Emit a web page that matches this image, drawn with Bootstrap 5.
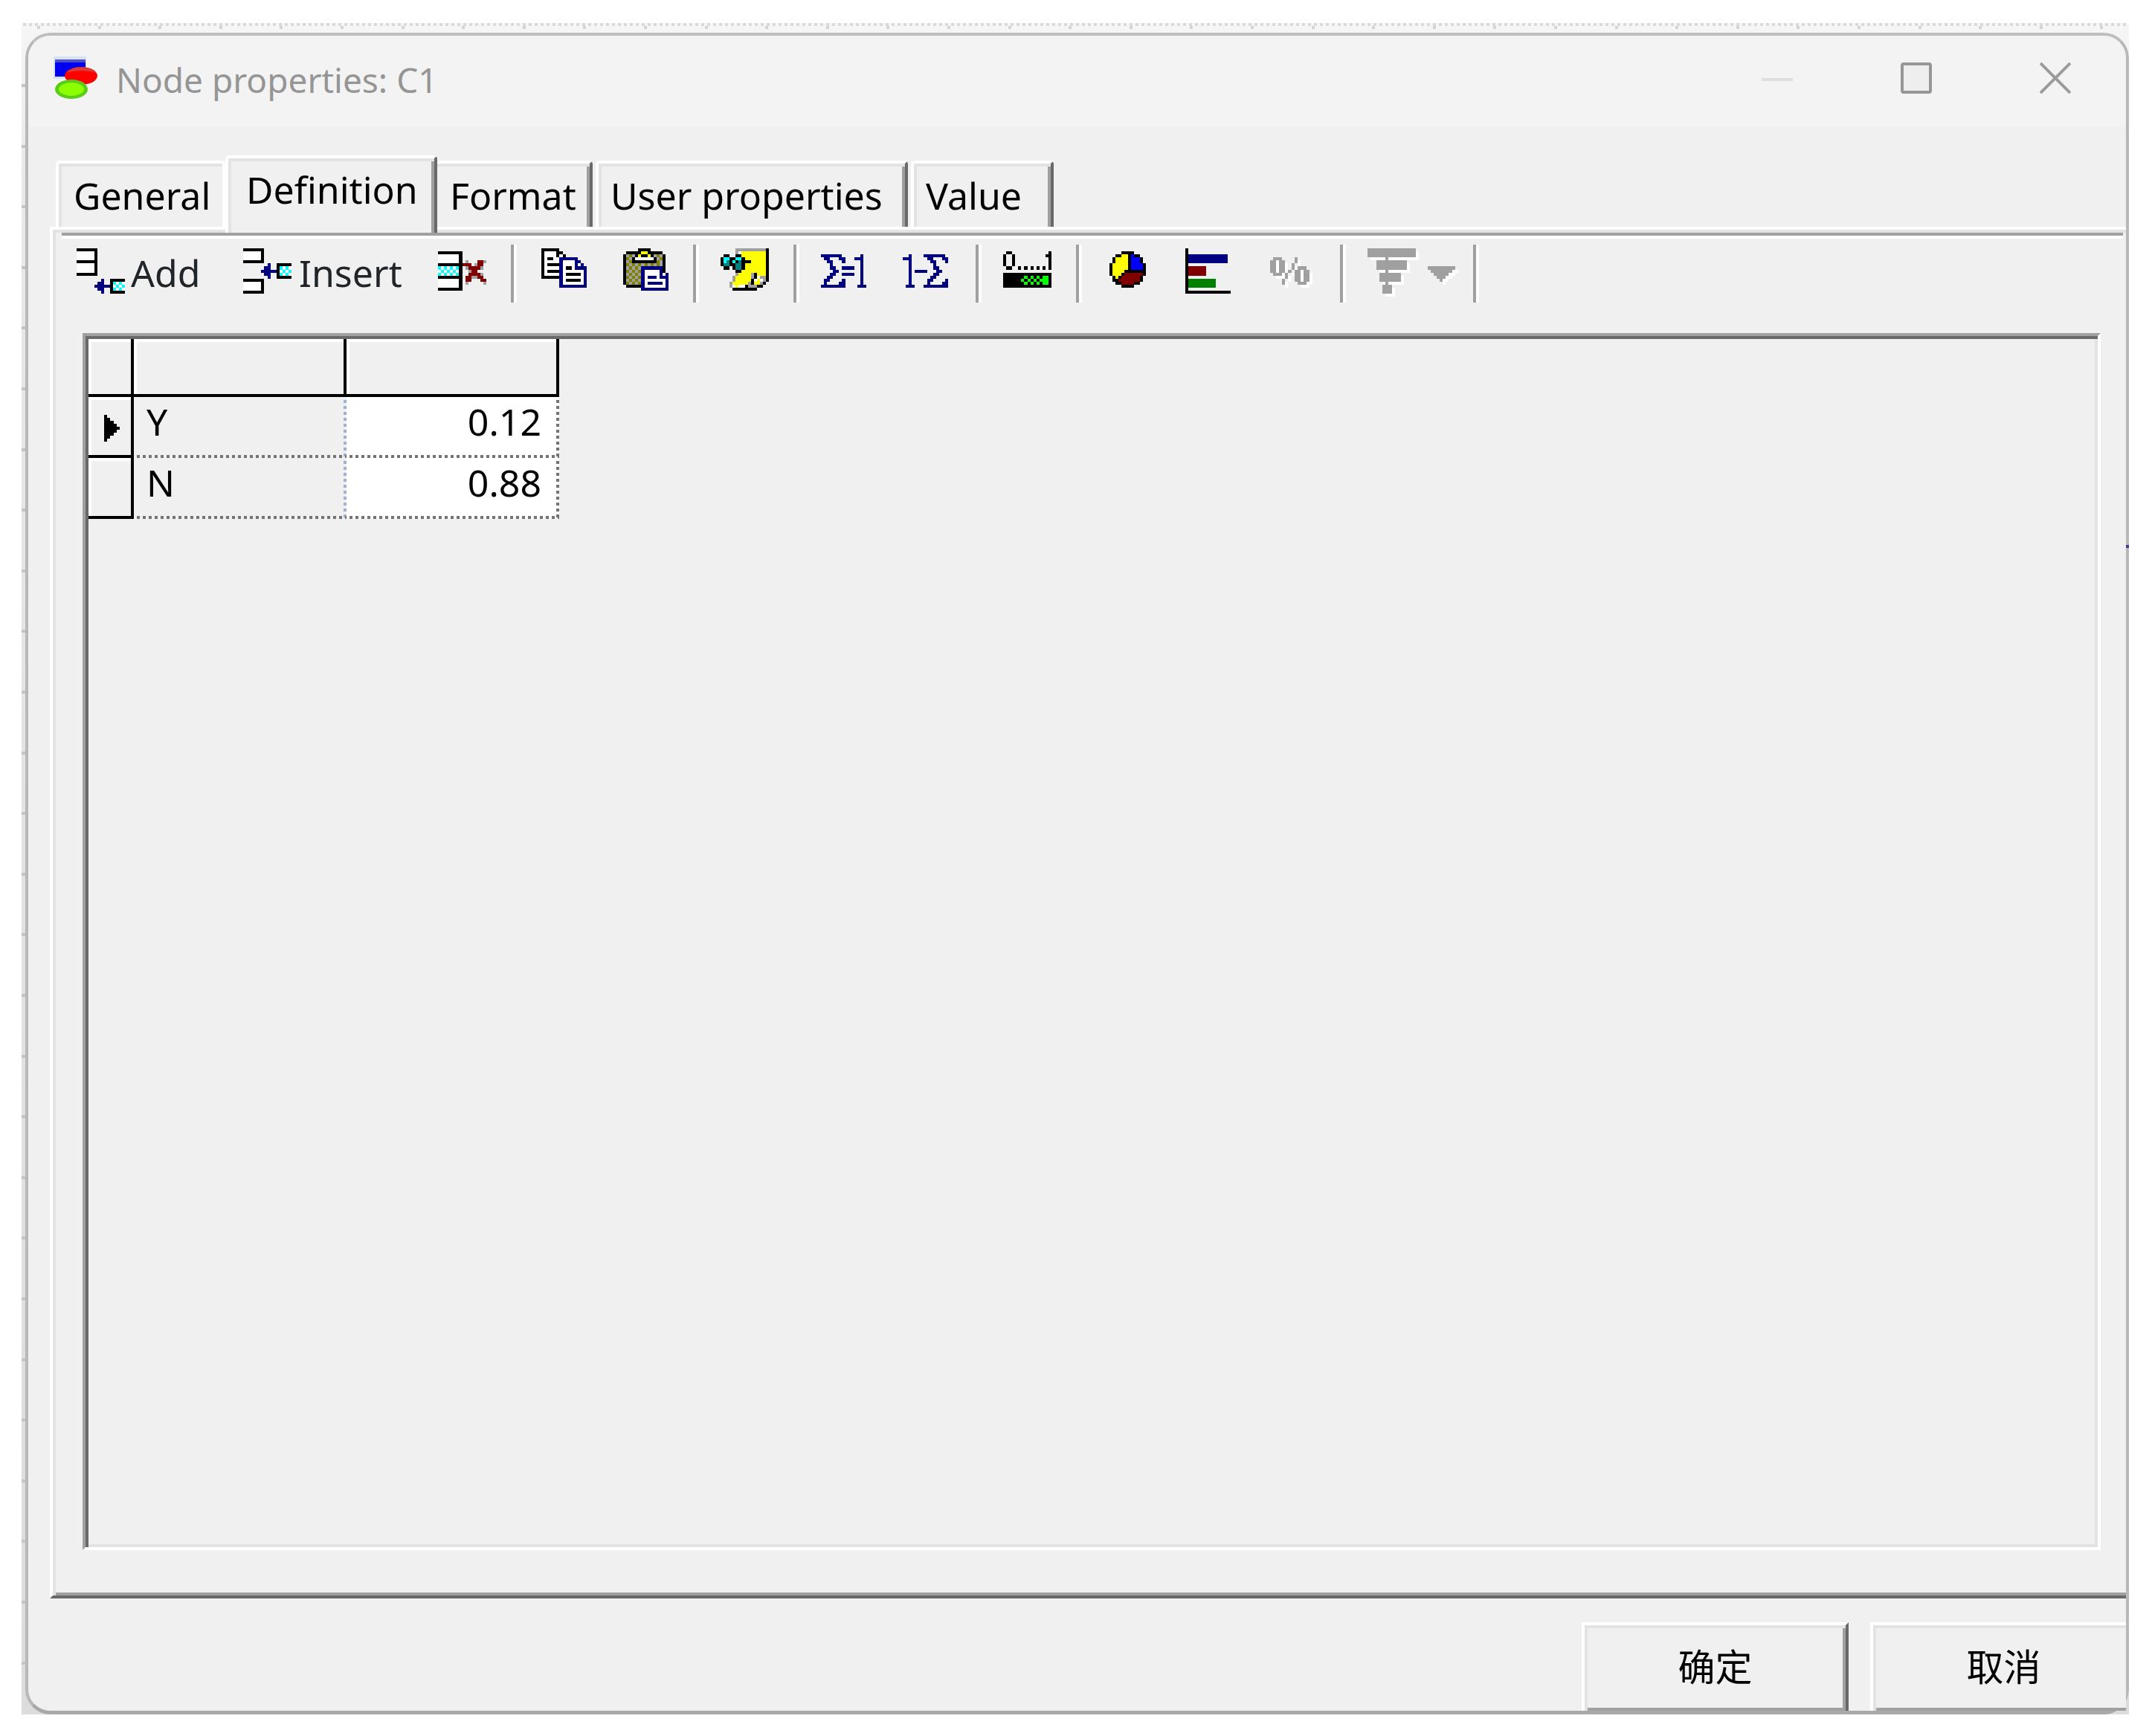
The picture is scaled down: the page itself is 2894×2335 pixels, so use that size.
<!DOCTYPE html>
<html lang="zh-CN">
<head>
<meta charset="utf-8">
<meta name="viewport" content="width=device-width, initial-scale=1">
<title>Node properties: C1</title>
<link href="https://cdn.jsdelivr.net/npm/bootstrap@5.3.0/dist/css/bootstrap.min.css" rel="stylesheet">
<style>
:root{--face:#f0f0f0;--lite:#e3e3e3;--mid:#a0a0a0;--dark:#696969}
body{font-family:"Noto Sans","Noto Sans CJK SC",sans-serif;font-size:50px;line-height:60px;color:#000;background:#fff;padding:31px 31px 29px 29px}
button{color:inherit}
/* design canvas behind the dialog: dotted ruler on top, ticks every 408/5 px */
.canvas-bg{--tick:#d4d4d4;padding:13px 0 0 5px;
 background:
 repeating-linear-gradient(90deg,#dadada 0 4px,transparent 4px 8px) 2px 0/100% 4px no-repeat,
 repeating-linear-gradient(90deg,var(--tick) 0 4px,transparent 4px 82px,var(--tick) 82px 86px,transparent 86px 163px,var(--tick) 163px 167px,transparent 167px 245px,var(--tick) 245px 249px,transparent 249px 326px,var(--tick) 326px 330px,transparent 330px 408px) 21px 4px/100% 4px no-repeat,
 repeating-linear-gradient(180deg,#c4c4c4 0 4px,transparent 4px 82px,#c4c4c4 82px 86px,transparent 86px 163px,#c4c4c4 163px 167px,transparent 167px 245px,#c4c4c4 245px 249px,transparent 249px 326px,#c4c4c4 326px 330px,transparent 330px 408px) 0 82px/5px 100% no-repeat,
 linear-gradient(180deg,#f6f6f6,#e9e9e9 200px,#dcdcdc)}
.dialog-box{background:var(--face);border:4px solid #b8b8b8;border-top-color:#bebebe;border-bottom:5px solid #a9a9a9;border-radius:34px}
.edge-mark{right:-4px;top:685px;width:4px;height:4px;background:#3c3c96}
.title-bar{height:122px;background:#f3f3f3;padding:0 2px 8px 34px;border-radius:30px 30px 0 0}
.title-text{font-size:46px;line-height:60px;color:#959595;margin-left:24px;padding-top:3px}
.win-btn{width:187px;height:106px;color:#969696}
.tab-strip{height:135px;padding-left:37px}
.prop-tab{height:89px;border:4px solid #fff;border-right-color:var(--dark);border-bottom:0;border-radius:5px 5px 0 0;background:var(--face);box-shadow:inset 4px 4px var(--lite),inset -4px 0 var(--mid);padding:0 13px 0 14px;margin-right:4px;text-align:left;line-height:60px;white-space:nowrap}
.prop-tab.first{width:228px;margin:0;border-right-color:#fff;box-shadow:inset 4px 4px var(--lite);padding-left:20px}
.prop-tab.active{width:285px;height:104px;margin:0 0 -8px;padding:0 0 16px 24px;z-index:2;box-shadow:inset 4px 4px var(--lite),inset -4px 0 var(--mid)}
.prop-tab.t-format{width:209px;border-left-width:0;box-shadow:inset 0 4px var(--lite),inset -4px 0 var(--mid);padding-left:17px}
.prop-tab.t-user{width:420px;padding-left:16px}
.prop-tab.t-value{width:192px;margin:0;padding-left:16px}
.pane{margin-left:29px;border:4px solid #fff;border-right:0;border-bottom-color:var(--dark);box-shadow:inset 4px 4px var(--lite),inset 0 -4px var(--mid);padding:4px 0 4px 4px}
.tool-bar{margin:0 4px 0 8px;border-top:4px solid var(--mid);box-shadow:inset 0 4px #fff;height:99px;padding-top:12px}
.tool-btn{display:flex;align-items:flex-start;width:110px;height:78px;padding:1px 0 0 29px;font-size:50px;line-height:60px}
.tool-btn span{padding-top:7px;margin-left:8px}
.tool-btn.b-add{width:224px;margin-left:-9px}
.tool-btn.b-insert{width:262px}
.tool-btn span.ins{margin-left:10px}
.tool-btn.drop{width:61px;padding-left:0}
.tool-sep{width:8px;height:78px;margin-left:17px;background:linear-gradient(90deg,var(--mid) 50%,#fff 50%)}
.px-art{flex:none;width:65px;height:65px;shape-rendering:crispEdges;display:block}
.grid-view{margin:36px 34px 57px 36px;border:4px solid;border-color:var(--mid) #fff #fff var(--mid);box-shadow:inset 4px 4px var(--dark),inset -4px -4px var(--lite);padding:4px}
.data-grid{table-layout:fixed;width:633px;border-collapse:separate;border-spacing:0}
.data-grid th,.data-grid td{padding:0;font-weight:400;vertical-align:top}
.data-grid th{border-right:4px solid #000;border-bottom:4px solid #000;box-shadow:inset 4px 4px #fff}
.data-grid thead th{height:78px}
.data-grid tbody tr{height:82px}
.data-grid td{--dots:#747474;--side:#747474;
 background:repeating-linear-gradient(90deg,var(--dots) 0 4px,transparent 4px 8px) 4px 100%/100% 4px no-repeat,
 repeating-linear-gradient(180deg,transparent 0 4px,var(--side) 4px 8px) 100% 0/4px 100% no-repeat,var(--cell,#f0f0f0)}
.data-grid td.state{--side:#99b4d1;padding:3px 0 0 17px}
.data-grid td.prob{--cell:#fff;padding:3px 24px 0 0;text-align:right}
.data-grid svg{display:block;margin:24px 0 0 21px}
.foot{height:151px;padding:32px 0 0;gap:29px;margin-right:-15px}
.dlg-btn{width:359px;height:123px;border:4px solid;border-color:#fff var(--dark) var(--dark) #fff;background:var(--face);box-shadow:inset 4px 4px var(--lite),inset -4px -4px var(--mid);font-size:50px;padding:0 0 4px}
</style>
<script src="https://cdn.jsdelivr.net/npm/bootstrap@5.3.0/dist/js/bootstrap.bundle.min.js"></script>
</head>
<body class="vh-100 d-flex flex-column">
<div class="canvas-bg flex-grow-1 d-flex flex-column">
<main class="dialog-box position-relative flex-grow-1 d-flex flex-column">
 <i class="edge-mark position-absolute"></i>
 <header class="title-bar d-flex align-items-center">
  <svg width="60" height="58" viewBox="0 0 60 58" aria-hidden="true"><path fill="#d5e3f0" d="M0 0h44v30H0z"/><path fill="#0000f0" d="M2 4h41v23H2z"/><path fill="#4f4fc8" d="M2 4h41v4H2z"/><ellipse cx="37" cy="26" rx="22" ry="12" fill="#f00"/><path fill="#d93c3c" d="M17 22q8-8 20-8t20 8q-20-6-40 0z"/><ellipse cx="24" cy="44" rx="22" ry="13" fill="#5ccc1c"/><ellipse cx="24" cy="44" rx="17" ry="9" fill="#8cff00"/></svg>
  <h1 class="title-text mb-0 me-auto fw-normal">Node properties: C1</h1>
  <button class="win-btn btn border-0 p-0" aria-label="Minimize" disabled><svg width="42" height="42"><path d="M0 23h42" stroke="#d4d4d4" stroke-width="4"/></svg></button>
  <button class="win-btn btn border-0 p-0" aria-label="Maximize"><svg width="42" height="42"><rect x="2" y="2" width="38" height="38" rx="2" fill="#eee" stroke="#969696" stroke-width="4"/></svg></button>
  <button class="win-btn btn border-0 p-0" aria-label="Close"><svg width="42" height="42"><path d="M1 1l40 40M41 1L1 41" stroke="#9b9b9b" stroke-width="4"/></svg></button>
 </header>
 <nav class="tab-strip d-flex align-items-end" role="tablist">
  <button class="prop-tab first" role="tab">General</button>
  <button class="prop-tab active position-relative" role="tab" aria-selected="true">Definition</button>
  <button class="prop-tab t-format" role="tab">Format</button>
  <button class="prop-tab t-user" role="tab">User properties</button>
  <button class="prop-tab t-value" role="tab">Value</button>
 </nav>
 <section class="pane flex-grow-1 d-flex flex-column">
  <div class="tool-bar d-flex align-items-start" role="toolbar">
   <button class="tool-btn b-add btn border-0 rounded-0"><svg class="px-art" data-art="add"></svg><span>Add</span></button>
   <button class="tool-btn b-insert btn border-0 rounded-0"><svg class="px-art" data-art="insert"></svg><span class="ins">Insert</span></button>
   <button class="tool-btn btn border-0 rounded-0" aria-label="Delete"><svg class="px-art" data-art="remove"></svg></button>
   <div class="tool-sep"></div>
   <button class="tool-btn btn border-0 rounded-0" aria-label="Copy"><svg class="px-art" data-art="copy"></svg></button>
   <button class="tool-btn btn border-0 rounded-0" aria-label="Paste"><svg class="px-art" data-art="paste"></svg></button>
   <div class="tool-sep"></div>
   <button class="tool-btn btn border-0 rounded-0" aria-label="Annotation"><svg class="px-art" data-art="note"></svg></button>
   <div class="tool-sep"></div>
   <button class="tool-btn btn border-0 rounded-0" aria-label="Normalize"><svg class="px-art" data-art="sum"></svg></button>
   <button class="tool-btn btn border-0 rounded-0" aria-label="Complement"><svg class="px-art" data-art="comp"></svg></button>
   <div class="tool-sep"></div>
   <button class="tool-btn btn border-0 rounded-0" aria-label="Elicit range"><svg class="px-art" data-art="range"></svg></button>
   <div class="tool-sep"></div>
   <button class="tool-btn btn border-0 rounded-0" aria-label="Pie chart"><svg class="px-art" data-art="pie"></svg></button>
   <button class="tool-btn btn border-0 rounded-0" aria-label="Bar chart"><svg class="px-art" data-art="bars"></svg></button>
   <button class="tool-btn btn border-0 rounded-0" aria-label="Percent"><svg class="px-art" data-art="percent"></svg></button>
   <div class="tool-sep"></div>
   <button class="tool-btn btn border-0 rounded-0" aria-label="Layout"><svg class="px-art overflow-visible" data-art="funnel"></svg></button>
   <button class="tool-btn drop btn border-0 rounded-0" aria-label="Layout menu"><svg class="px-art overflow-visible" data-art="arrow"></svg></button>
   <div class="tool-sep ms-0"></div>
  </div>
  <div class="grid-view flex-grow-1">
   <table class="data-grid">
    <colgroup><col style="width:61px"><col><col></colgroup>
    <thead><tr><th></th><th></th><th></th></tr></thead>
    <tbody>
     <tr><th scope="row"><svg width="21" height="36" viewBox="0 0 5 9" preserveAspectRatio="none" shape-rendering="crispEdges"><path d="M0 0h1v1h1v1h1v1h1v1h1v1H4v1H3v1H2v1H1v1H0z"/></svg></th><td class="state">Y</td><td class="prob">0.12</td></tr>
     <tr><th scope="row"></th><td class="state">N</td><td class="prob">0.88</td></tr>
    </tbody>
   </table>
  </div>
 </section>
 <div class="overflow-hidden">
  <footer class="foot d-flex justify-content-end">
   <button class="dlg-btn">确定</button>
   <button class="dlg-btn">取消</button>
  </footer>
 </div>
</main>
</div>
<script>
// Toolbar icons as pixel maps on a 16x16 grid: x, y = offset of the map, s = engraved (disabled) look
const colours={K:'#000',W:'#fff',N:'#000080',C:'#0ff',T:'#008080',Y:'#ff0',O:'#808000',G:'#a0a0a0',R:'#800000',B:'#00f',L:'#0f0',E:'#008000'};
const box=['KKKKKKK','WWWWWWK','WWWWWWK','WWWWWWK'];
const arrow=['........N..KKKKK','.......NN..KCWCW','......NNNNNKWCWC','.......NN..KCWCW','........N..KKKKK'];
const rep=(r,n)=>Array(n).fill(r);
const art={
add:{y:1,m:[...box,...box,'KKKKKKK','',...arrow]},
insert:{y:1,m:[...box,'KKKKKKK',...arrow,...box,'KKKKKKK']},
remove:{y:2,m:['KKKKKKKK','WWWWWWWK','WWWWWWWK','WWWWWWWK.G...RRG','KKKKKKKKRRR.GRR.','CWCWCWCK.GRRRRG.','WCWCWCWK..GRR...','CWCWCWCK..RRRRG.','KKKKKKKK.RRGGRR.','WWWWWWWK.RR...RR','WWWWWWWK.G.....G','WWWWWWWK','KKKKKKKK']},
copy:{x:1,y:1,m:['KKKKKK','KWWWWKK','KWWWWKWK','KWKKWWNNNNNN','KWWWWWNWWWWNN','KWKKKKNWWWWNWN','KWWWWWNWKKWNNNN','KWKKKKNWWWWWWWN','KWWWWWNWKKKKKWN','KKKKKKNWWWWWWWN','......NWKKKKKWN','......NWWWWWWWN','......NNNNNNNNN']},
paste:{x:1,y:1,m:['.....KKKK','.KKKKKYYKKKKK','KGOGKYKKYKGOGK','KOGKWWWWWWKGOK','KGOKKKKKKKKOGK','KOGOGOGOGOGOGK','KGOGOGNNNNNNNK','KOGOGONWWWWWNK','KGOGOGNWWWWWNWN','KOGOGONWNNNWNNN','KGOGOGNWWWWWWWN','KOGOGONWNNNNNWN','.KKKKKNWWWWWWWN','......NNNNNNNNN']},
note:{y:1,m:['.....GGGGGGGGGGK','.....GWYYYYYYYYK','.KK..KKYYYYYYYYK','KCCKKCCKYYYYYYYK','KCTKCKTKKKYYYYYK','KTTKKTTKYYYYYYYK','.KK.KTTKYYYYYYYK','.....KKYYYYYYYYK','.....GYYYYGKYYYK','....GYYYYYGKWGGK','....GYYYYYKWYWGK','...GYYYYYGKYYGK.','...GWYWWKGGGKK..','....KKKKKKKK']},
sum:{y:3,m:['NNNNNNN......N','.NN...NN...NNN','..NN...N.....N','...N.........N','...NN..NNNN..N','....NN.......N','...NN..NNNN..N','..NN.........N','.NN....N.....N','.N....NN.....N','NNNNNNNN....NNN']},
comp:{y:3,m:['..N....NNNNNNN','NNN.....NN...NN','..N......NN...N','..N.......N','..N.......NN','..N.NNNN...NN','..N.......NN','..N......NN','..N.....NN....N','..N.....N....NN','.NNN...NNNNNNNN']},
range:{y:2,m:['.KK............K','K..K..........KK','K..K...........K','K..K...........K','K..K...........K','.KK..K.K.K.K.K.K','','KKKKKKKKKKKKKKKK','KKKKKKKLKLKLKLLK','KKKKKKLKLKLKLLLK','KKKKKKKLKLKLKLLK','KKKKKKKKKKKKKKKK']},
pie:{x:2,y:2,m:['....KKKK','..KKYYKBKK','.KYYYYKBBBK','.KYYYYKBBBK','KYYYYYKBBBBK','KYYYYYKBBBBK','KYYYYKKKKKKK','KYYYKRRRRRRK','.KYKRRRRRRK','.KKRRRRRRRK','..KKRRRRKK','....KKKK']},
bars:{y:1,m:['K','K',...rep('KNNNNNNNNNNNNN',3),'K',...rep('KRRRRRR',3),'K',...rep('KEEEEEEEEE',3),'K','KKKKKKKKKKKKKKK']},
percent:{x:1,y:4,s:1,m:['.GGG....G','GG.GG...G','GG.GG..G','GG.GG..G.GGG','GG.GG.G.GG.GG','.GGG.G..GG.GG','.....G..GG.GG','....G...GG.GG','....G....GGG']},
funnel:{y:1,s:1,m:[...rep('GGGGGGGGGGGGGGGG',3),'......G',...rep('...GGGGGGGGGG',3),'......G',...rep('....GGGGGGG',3),'......G',...rep('.....GGG',3)]},
arrow:{y:7,s:1,m:['GGGGGGGGG','.GGGGGGG','..GGGGG','...GGG','....G']}};
function paint(a,dx,dy,fill){
 let out='';
 a.m.forEach((row,j)=>{for(const r of row.matchAll(/([A-Z])\1*/g))
  out+=`<rect x="${(a.x||0)+r.index+dx}" y="${(a.y||0)+j+dy}" width="${r[0].length}" height="1" fill="${fill||colours[r[1]]}"/>`});
 return out;
}
document.querySelectorAll('[data-art]').forEach(s=>{
 const a=art[s.dataset.art];
 s.setAttribute('viewBox','0 0 16 16');
 s.innerHTML=(a.s?paint(a,1,1,'#fff'):'')+paint(a,0,0);
});
</script>
</body>
</html>
